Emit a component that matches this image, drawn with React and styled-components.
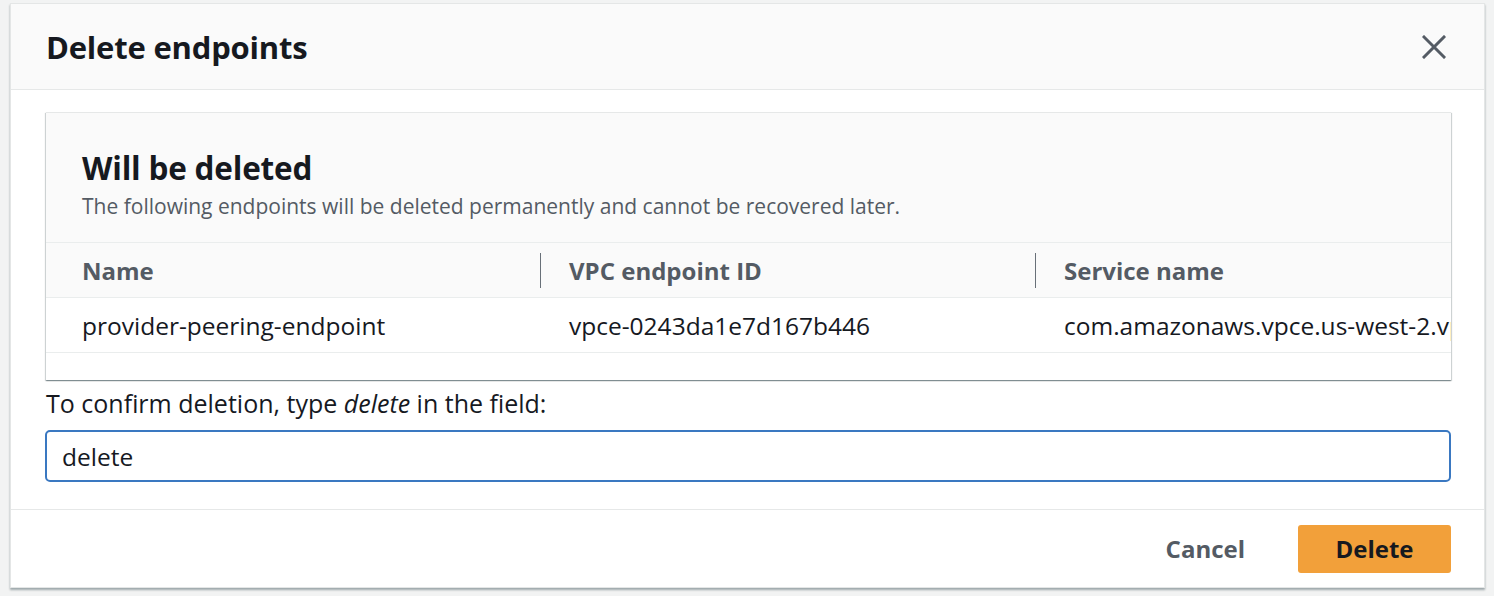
import React from "react";
import styled, { createGlobalStyle } from "styled-components";

const Global = createGlobalStyle`
  html, body { margin: 0; padding: 0; background: #f2f3f3; }
  body { font-family: "Open Sans", "Noto Sans", Arial, sans-serif; color: #16191f; }
  * { box-sizing: border-box; }
`;

const Page = styled.div`
  width: 1494px;
  height: 596px;
  padding: 3px 10px 0 10px;
  background: #f2f3f3;
  overflow: hidden;
`;

const Modal = styled.div`
  width: 1475px;
  height: 585px;
  background: #fff;
  border: 1px solid #e4e6e6;
  box-shadow: 0 2px 2px rgba(0, 28, 36, 0.35);
  display: flex;
  flex-direction: column;
`;

const Header = styled.div`
  height: 86px;
  flex: none;
  background: #fafafa;
  border-bottom: 1px solid #e6e8e8;
  display: flex;
  align-items: center;
  justify-content: space-between;
  padding: 0 36px 0 35px;
`;

const Title = styled.h2`
  margin: 0;
  font-size: 31px;
  line-height: 40px;
  font-weight: 700;
  letter-spacing: -0.2px;
  color: #16191f;
`;

const CloseButton = styled.button`
  border: none;
  background: transparent;
  padding: 0;
  width: 28px;
  height: 28px;
  display: flex;
  align-items: center;
  justify-content: center;
  cursor: pointer;
`;

const Body = styled.div`
  padding: 22px 33px 27px 35px;
  display: flex;
  flex-direction: column;
  border-bottom: 1px solid #e6e8e8;
`;

const Card = styled.div`
  background: #fff;
  border-top: 1px solid #e6e8e8;
  box-shadow: 0 1px 1px 0 rgba(0, 28, 36, 0.3), 1px 1px 1px 0 rgba(0, 28, 36, 0.15), -1px 1px 1px 0 rgba(0, 28, 36, 0.15);
  overflow: hidden;
`;

const CardHeader = styled.div`
  background: #fafafa;
  padding: 35px 36px 22px 36px;
  border-bottom: 1px solid #eaeded;
`;

const CardTitle = styled.h3`
  margin: 0;
  font-size: 31.5px;
  line-height: 40px;
  font-weight: 700;
  letter-spacing: -0.2px;
  color: #16191f;
`;

const CardSub = styled.p`
  margin: 4px 0 0 0;
  font-size: 21px;
  line-height: 28px;
  color: #545b64;
`;

const Table = styled.div`
  display: grid;
  grid-template-columns: 494px 495px 1fr;
`;

const HeadCell = styled.div`
  position: relative;
  height: 55px;
  background: #fafafa;
  border-bottom: 1px solid #eaeded;
  display: flex;
  align-items: center;
  padding-left: ${(p) => (p.$first ? "36px" : "29px")};
  font-size: 24px;
  font-weight: 700;
  color: #545b64;
  white-space: nowrap;
`;

const Divider = styled.span`
  position: absolute;
  left: 0;
  top: 10px;
  bottom: 9px;
  width: 1px;
  background: #687078;
`;

const Cell = styled.div`
  height: 55px;
  border-bottom: 1px solid #eaeded;
  display: flex;
  align-items: center;
  padding-left: ${(p) => (p.$first ? "36px" : "29px")};
  font-size: 24.5px;
  color: #16191f;
  white-space: nowrap;
  overflow: hidden;
`;

const Spacer = styled.div`
  height: 27px;
`;

const Label = styled.label`
  margin-top: 9px;
  font-size: 25px;
  line-height: 28px;
  color: #16191f;
  em { font-style: italic; }
`;

const Input = styled.input`
  margin-top: 13px;
  margin-left: -1px;
  width: 1406px;
  height: 52px;
  border: 2px solid #3a78c1;
  border-radius: 5px;
  padding: 0 15px;
  font-family: inherit;
  font-size: 24.5px;
  color: #16191f;
  outline: none;
`;

const Footer = styled.div`
  flex: 1;
  display: flex;
  justify-content: flex-end;
  align-items: center;
  gap: 35px;
  padding: 0 33px 0 0;
`;

const LinkButton = styled.button`
  border: none;
  background: transparent;
  font-family: inherit;
  font-size: 24px;
  font-weight: 700;
  color: #545b64;
  padding: 0 18px;
  height: 48px;
`;

const PrimaryButton = styled.button`
  border: none;
  background: #f2a03a;
  border-radius: 3px;
  width: 153px;
  height: 48px;
  font-family: inherit;
  font-size: 24px;
  font-weight: 700;
  color: #16191f;
`;

export default function App() {
  const cols = ["Name", "VPC endpoint ID", "Service name"];
  const row = [
    "provider-peering-endpoint",
    "vpce-0243da1e7d167b446",
    "com.amazonaws.vpce.us-west-2.vpce-svc-0a1b2c3d4e5f",
  ];
  return (
    <Page>
      <Global />
      <Modal>
        <Header>
          <Title>Delete endpoints</Title>
          <CloseButton aria-label="Close">
            <svg width="24" height="24" viewBox="0 0 24 24">
              <path d="M2 2 L22 22 M22 2 L2 22" stroke="#545b64" strokeWidth="3" strokeLinecap="square" />
            </svg>
          </CloseButton>
        </Header>
        <Body>
          <Card>
            <CardHeader>
              <CardTitle>Will be deleted</CardTitle>
              <CardSub>The following endpoints will be deleted permanently and cannot be recovered later.</CardSub>
            </CardHeader>
            <Table>
              {cols.map((c, i) => (
                <HeadCell key={c} $first={i === 0}>
                  {i > 0 && <Divider />}
                  {c}
                </HeadCell>
              ))}
              {row.map((c, i) => (
                <Cell key={c} $first={i === 0}>{c}</Cell>
              ))}
            </Table>
            <Spacer />
          </Card>
          <Label>
            To confirm deletion, type <em>delete</em> in the field:
          </Label>
          <Input defaultValue="delete" />
        </Body>
        <Footer>
          <LinkButton>Cancel</LinkButton>
          <PrimaryButton>Delete</PrimaryButton>
        </Footer>
      </Modal>
    </Page>
  );
}
